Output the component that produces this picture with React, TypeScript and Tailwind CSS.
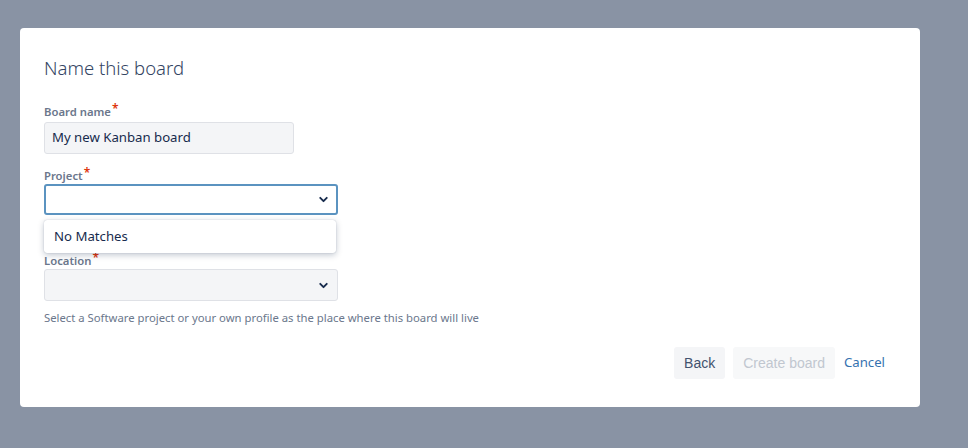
import { ChevronDown } from 'lucide-react';

const Label = ({ text }: { text: string }) => (
  <div className="flex items-start h-[16px] text-[11.3px] font-semibold text-[#6b778c] leading-[16px]">
    {text}
    <span className="text-[#de350b] text-[12px] leading-[10px] ml-[1px]">*</span>
  </div>
);

const App = () => {
  return (
    <div
      className="w-[968px] h-[448px] bg-[#8993a4] pt-[28px] pl-[20px]"
      style={{ fontFamily: '"Noto Sans", "Open Sans", sans-serif' }}
    >
      <div className="w-[900px] h-[379px] bg-white rounded-[4px] px-[24px] pt-[28px] relative">
        <h1 className="text-[18.5px] leading-[24px] text-[#344563] font-light">Name this board</h1>

        <div className="mt-[24px]">
          <Label text="Board name" />
          <div className="mt-[2px] w-[250px] h-[32px] bg-[#f4f5f7] border border-[#dfe1e6] rounded-[3px] flex items-center px-[7px] text-[13.2px] text-[#172b4d]">
            My new Kanban board
          </div>
        </div>

        <div className="mt-[14px]">
          <Label text="Project" />
          <div className="w-[294px] h-[31px] bg-white border-2 border-[#5b93c0] rounded-[3px] flex items-center justify-end pr-[6px]">
            <ChevronDown size={13} strokeWidth={3.5} className="text-[#172b4d]" />
          </div>
        </div>

        <div className="absolute left-[24px] top-[192px] w-[292px] h-[33px] bg-white rounded-[3px] shadow-[0_2px_6px_rgba(9,30,66,0.25),0_0_1px_rgba(9,30,66,0.31)] flex items-center px-[10px] text-[13.2px] text-[#172b4d]">
          No Matches
        </div>

        <div className="mt-[38px]">
          <Label text="Location" />
          <div className="w-[294px] h-[32px] bg-[#f4f5f7] border border-[#dfe1e6] rounded-[3px] flex items-center justify-end pr-[7px]">
            <ChevronDown size={13} strokeWidth={3.5} className="text-[#172b4d]" />
          </div>
        </div>

        <p className="mt-[9px] text-[11.3px] leading-[16px] text-[#6b778c]">
          Select a Software project or your own profile as the place where this board will live
        </p>

        <div className="flex justify-end items-center gap-[8px] mt-[21px] pr-[10px]">
          <button
            className="h-[32px] px-[10px] rounded-[3px] bg-[#f4f5f7] text-[#42526e] text-[14px]"
            style={{ fontFamily: '"Liberation Sans", Arial, sans-serif' }}
          >
            Back
          </button>
          <button
            className="h-[32px] px-[10px] rounded-[3px] bg-[#f7f8f9] text-[#c1c7d0] text-[14px]"
            style={{ fontFamily: '"Liberation Sans", Arial, sans-serif' }}
          >
            Create board
          </button>
          <button className="h-[32px] px-[1px] text-[13.2px] text-[#3572b0]">Cancel</button>
        </div>
      </div>
    </div>
  );
};

export default App;
